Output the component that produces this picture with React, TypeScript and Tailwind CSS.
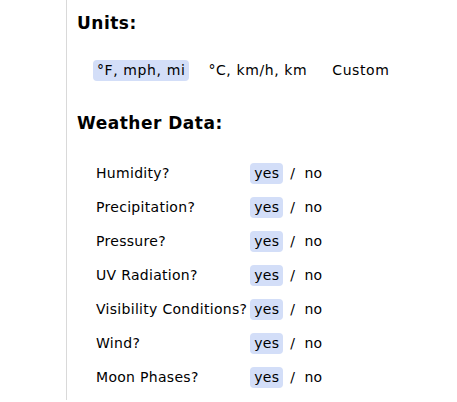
import React from "react";

const rows = [
  "Humidity?",
  "Precipitation?",
  "Pressure?",
  "UV Radiation?",
  "Visibility Conditions?",
  "Wind?",
  "Moon Phases?",
];

export default function App() {
  return (
    <div
      className="w-[457px] h-[402px] bg-white text-black"
      style={{ fontFamily: '"DejaVu Sans", Verdana, sans-serif' }}
    >
      <div className="ml-[66px] h-[400px] border-l border-[#d9d9d9] pl-[10px] pt-[12px]">
        <h2 className="text-[17px] font-bold leading-[22px] tracking-[0.5px]">Units:</h2>
        <div className="mt-[26px] ml-[16px] flex items-center text-[14px] leading-[21px] tracking-[0.6px]">
          <span className="rounded-[4px] bg-[#d3def8] px-[4px]">°F, mph, mi</span>
          <span className="ml-[15px] px-[4px]">°C, km/h, km</span>
          <span className="ml-[17px] px-[4px]">Custom</span>
        </div>
        <h2 className="mt-[31px] text-[17px] font-bold leading-[22px] tracking-[0.5px]">Weather Data:</h2>
        <div className="mt-[29px] ml-[19px] grid grid-cols-[auto_auto] justify-start gap-y-[13px] text-[14px] leading-[21px] tracking-[0.3px]">
          {rows.map((r) => (
            <React.Fragment key={r}>
              <div>{r}</div>
              <div className="flex items-center">
                <span className="rounded-[4px] bg-[#d3def8] px-[4px] ml-[3px]">yes</span>
                <span className="ml-[7px]">/</span>
                <span className="ml-[9px]">no</span>
              </div>
            </React.Fragment>
          ))}
        </div>
      </div>
    </div>
  );
}
